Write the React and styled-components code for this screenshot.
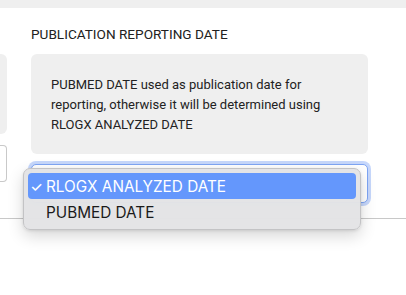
import React from "react";
import styled, { createGlobalStyle } from "styled-components";

const Global = createGlobalStyle`
  html, body { margin: 0; padding: 0; background: #ffffff; }
  body { font-family: Roboto, "Noto Sans", sans-serif; color: #212121; }
  #root { width: 406px; height: 295px; overflow: hidden; }
`;

const Page = styled.div`
  width: 406px;
  height: 295px;
  display: flex;
  flex-direction: column;
  position: relative;
`;

const TopBar = styled.div`
  height: 8px;
  background: #efefef;
  flex: none;
`;

const Body = styled.div`
  display: flex;
  gap: 24px;
  padding-top: 18px;
`;

const SideColumn = styled.div`
  width: 7px;
  flex: none;
  display: flex;
  flex-direction: column;
  padding-top: 28px;
  gap: 11px;
`;

const SideNote = styled.div`
  height: 80px;
  background: #efefef;
  border-radius: 0 6px 6px 0;
`;

const SideInput = styled.div`
  height: 35px;
  border: 1px solid #c9c9c9;
  border-left: none;
  border-radius: 0 4px 4px 0;
  background: #fff;
`;

const Main = styled.div`
  width: 337px;
  display: flex;
  flex-direction: column;
`;

const Label = styled.div`
  font-size: 13.6px;
  line-height: 16px;
  height: 16px;
  white-space: nowrap;
  color: #212121;
  margin-bottom: 12px;
`;

const Note = styled.div`
  background: #efefef;
  border-radius: 6px;
  padding: 21px 20px 19px 20px;
  font-size: 13px;
  line-height: 20px;
  color: #222;
`;

const Select = styled.div`
  margin-top: 10px;
  height: 37px;
  border: 1px solid #7ea5f4;
  border-radius: 5px;
  box-shadow: 0 0 0 3px #c6d7fb;
  background: #fff;
`;

const Divider = styled.div`
  margin-top: 15px;
  height: 1px;
  background: #c8c8c8;
`;

const Menu = styled.div`
  position: absolute;
  left: 23px;
  top: 168px;
  width: 338px;
  box-sizing: border-box;
  padding: 4px;
  background: rgba(227, 227, 229, 0.98);
  border: 1px solid #c3c3c5;
  border-radius: 7px;
  box-shadow: 0 6px 16px rgba(0, 0, 0, 0.16), 0 1px 3px rgba(0, 0, 0, 0.1);
  display: flex;
  flex-direction: column;
`;

const Item = styled.div`
  height: 26px;
  display: flex;
  align-items: center;
  border-radius: 4px;
  padding-left: 1px;
  font-family: Inter, "Liberation Sans", sans-serif;
  font-size: 15.3px;
  color: ${(p) => (p.$active ? "#ffffff" : "#1a1a1a")};
  background: ${(p) => (p.$active ? "#6497fc" : "transparent")};
`;

const Check = styled.span`
  width: 15px;
  margin-right: 2px;
  flex: none;
  font-size: 14px;
  font-weight: 500;
  display: inline-flex;
  justify-content: center;
`;

export default function App() {
  return (
    <>
      <Global />
      <Page>
        <TopBar />
        <Body>
          <SideColumn>
            <SideNote />
            <SideInput />
          </SideColumn>
          <Main>
            <Label>PUBLICATION REPORTING DATE</Label>
            <Note>
              PUBMED DATE used as publication date for reporting, otherwise it
              will be determined using RLOGX ANALYZED DATE
            </Note>
            <Select />
          </Main>
        </Body>
        <Divider />
        <Menu>
          <Item $active>
            <Check>✓</Check>
            RLOGX ANALYZED DATE
          </Item>
          <Item>
            <Check />
            PUBMED DATE
          </Item>
        </Menu>
      </Page>
    </>
  );
}
